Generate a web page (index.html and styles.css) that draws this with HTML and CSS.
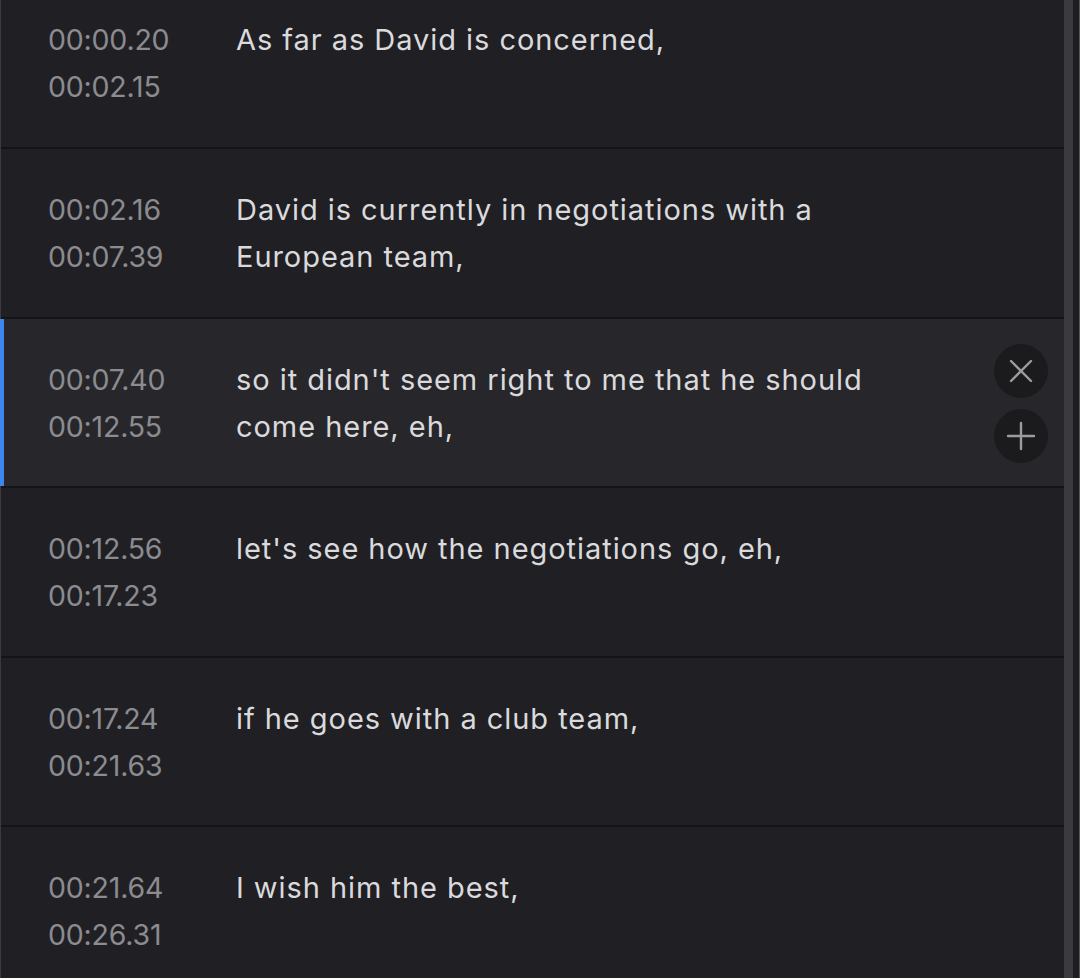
FILE: index.html
```html
<!DOCTYPE html>
<html>
<head>
<meta charset="utf-8">
<link rel="stylesheet" href="styles.css">
</head>
<body>
<div class="panel">
  <div class="list">
    <div class="row first">
      <div class="times"><div>00:00.20</div><div>00:02.15</div></div>
      <div class="text">As far as David is concerned,</div>
    </div>
    <div class="row">
      <div class="times"><div>00:02.16</div><div>00:07.39</div></div>
      <div class="text">David is currently in negotiations with a<br>European team,</div>
    </div>
    <div class="row active">
      <div class="times"><div>00:07.40</div><div>00:12.55</div></div>
      <div class="text">so it didn't seem right to me that he should<br>come here, eh,</div>
      <div class="actions">
        <button class="btn" aria-label="Remove">
          <svg width="28" height="28" viewBox="0 0 28 28"><path d="M4 4 L24 24 M24 4 L4 24" stroke="#9b9ba0" stroke-width="2.4" stroke-linecap="round" fill="none"/></svg>
        </button>
        <button class="btn" aria-label="Add">
          <svg width="30" height="30" viewBox="0 0 30 30"><path d="M15 2 V28 M2 15 H28" stroke="#9b9ba0" stroke-width="2.4" stroke-linecap="round" fill="none"/></svg>
        </button>
      </div>
    </div>
    <div class="row">
      <div class="times"><div>00:12.56</div><div>00:17.23</div></div>
      <div class="text">let's see how the negotiations go, eh,</div>
    </div>
    <div class="row">
      <div class="times"><div>00:17.24</div><div>00:21.63</div></div>
      <div class="text">if he goes with a club team,</div>
    </div>
    <div class="row">
      <div class="times"><div>00:21.64</div><div>00:26.31</div></div>
      <div class="text">I wish him the best,</div>
    </div>
  </div>
  <div class="scrollbar"></div>
  <div class="gutter"></div>
</div>
</body>
</html>
```
FILE: styles.css
```css
html, body {
  margin: 0;
  padding: 0;
  background: #202024;
}
body {
  width: 1080px;
  height: 978px;
  overflow: hidden;
  font-family: Inter, "Noto Sans", sans-serif;
}
.panel {
  display: flex;
  height: 978px;
  border-left: 1px solid #3a3a3f;
  border-right: 1px solid #55555a;
  box-sizing: border-box;
  background: #202024;
}
.list {
  flex: 1;
  display: flex;
  flex-direction: column;
}
.row {
  display: flex;
  align-items: flex-start;
  box-sizing: border-box;
  height: 169.5px;
  flex-shrink: 0;
  padding-top: 37px;
  border-bottom: 2.5px solid #141417;
  position: relative;
}
.row.first {
  height: 149px;
  padding-top: 16px;
}
.row.active {
  background: #27272b;
}
.row.active::before {
  content: "";
  position: absolute;
  left: -1px;
  top: 0;
  bottom: 0;
  width: 4px;
  background: #3d86ee;
}
.times {
  width: 188px;
  padding-left: 47px;
  flex-shrink: 0;
  color: #8b8b90;
  font-size: 28.5px;
  letter-spacing: -0.2px;
  line-height: 47px;
}
.text {
  flex: 1;
  color: #dadadd;
  font-size: 29px;
  letter-spacing: 0.95px;
  line-height: 47px;
}
.actions {
  display: flex;
  flex-direction: column;
  gap: 11px;
  margin-top: -12px;
  margin-right: 16px;
}
.btn {
  width: 54px;
  height: 54px;
  border-radius: 50%;
  border: none;
  padding: 0;
  background: #1b1b1e;
  display: flex;
  align-items: center;
  justify-content: center;
}
.scrollbar {
  width: 9px;
  background: #3b3b3f;
}
.gutter {
  width: 6px;
  background: #1e1e21;
}
```
